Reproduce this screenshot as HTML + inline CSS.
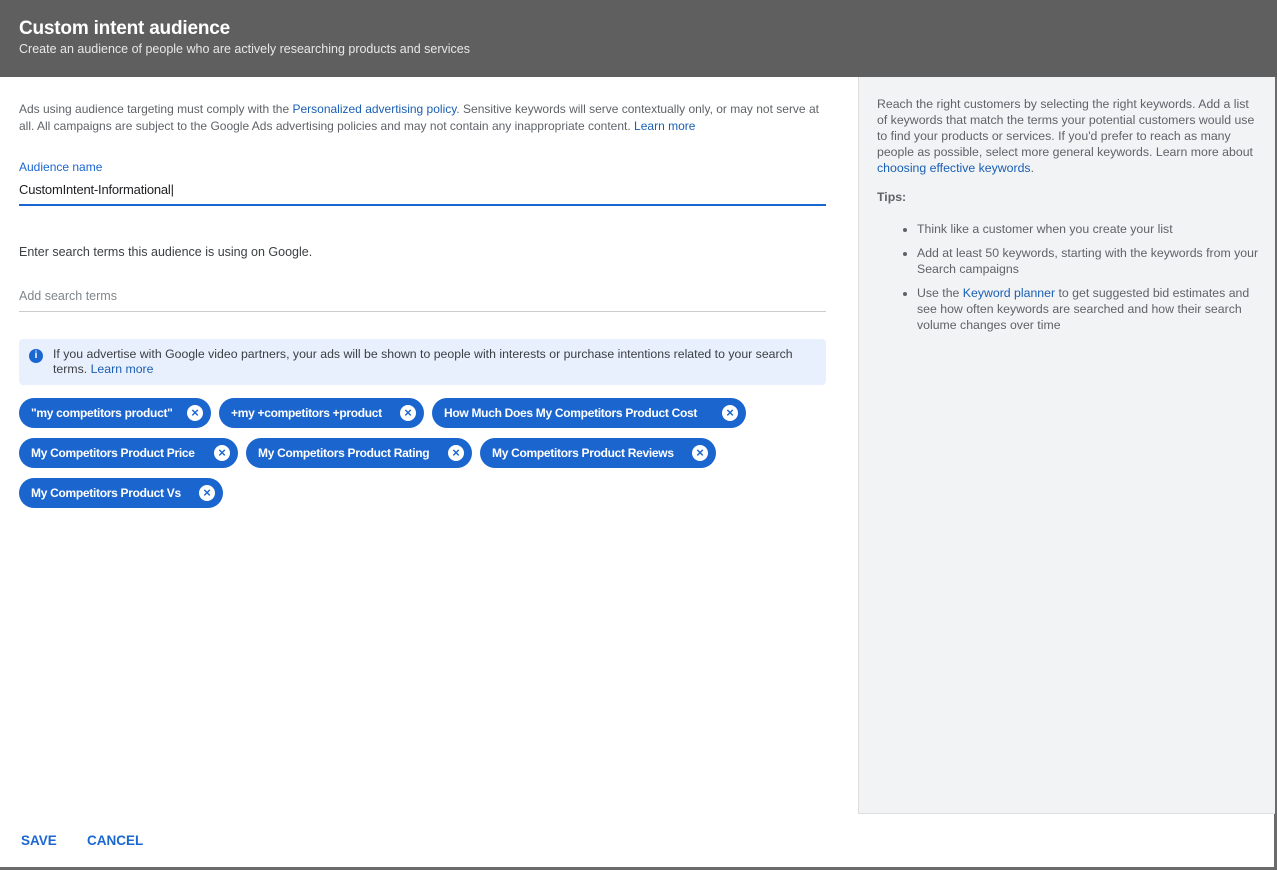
<!DOCTYPE html><html><head><style>
body{margin:0;width:1277px;height:870px;background:#6b6b6b;font-family:"Liberation Sans",Arial,sans-serif;position:relative;overflow:hidden;color:#3c4043}
.hd{position:absolute;left:0;top:0;width:1277px;height:77px;background:#5f5f5f;color:#fff}
.hd h1{position:absolute;left:19px;top:18px;margin:0;font-size:19px;font-weight:bold;letter-spacing:-0.2px}
.hd p{position:absolute;left:19px;top:42px;margin:0;font-size:12.5px;color:#e8e8e8}
.main{position:absolute;left:0;top:77px;width:858px;height:737px;background:#fff}
.side{position:absolute;left:858px;top:77px;width:416px;height:736px;background:#f1f3f4;border-left:1px solid #ddd;border-bottom:1px solid #ddd;font-size:12.3px;line-height:16px;color:#5f6368}
.foot{position:absolute;left:0;top:814px;width:1274px;height:53px;background:#fff}
a{color:#1a5fb4;text-decoration:none}
.chip{position:absolute;height:30px;border-radius:15px;background:#1b65cf;color:#fff;font-size:12px;font-weight:bold;line-height:30px;padding-left:12px;box-sizing:border-box;white-space:nowrap;letter-spacing:-0.3px}
.x{position:absolute;right:8px;top:7px;width:16px;height:16px;border-radius:50%;background:#fff;color:#1b65cf;font-size:13px;line-height:16px;text-align:center;font-weight:bold;letter-spacing:0}
li{margin-bottom:8px}
</style></head><body>
<div class="hd"><h1>Custom intent audience</h1><p>Create an audience of people who are actively researching products and services</p></div>
<div class="main">
<div style="position:absolute;left:19px;top:24px;width:810px;font-size:12px;line-height:17px;color:#5f6368">Ads using audience targeting must comply with the <a>Personalized advertising policy</a>. Sensitive keywords will serve contextually only, or may not serve at all. All campaigns are subject to the Google Ads advertising policies and may not contain any inappropriate content. <a>Learn more</a></div>
<div style="position:absolute;left:19px;top:83px;font-size:12px;color:#1a67d2">Audience name</div>
<div style="position:absolute;left:19px;top:105px;font-size:13px;color:#202124;letter-spacing:-0.2px">CustomIntent-Informational|</div>
<div style="position:absolute;left:19px;top:127px;width:807px;height:2px;background:#1a67d2"></div>
<div style="position:absolute;left:19px;top:168px;font-size:12.5px">Enter search terms this audience is using on Google.</div>
<div style="position:absolute;left:19px;top:212px;font-size:12.5px;color:#80868b">Add search terms</div>
<div style="position:absolute;left:19px;top:234px;width:807px;height:1px;background:#ccc"></div>
<div style="position:absolute;left:19px;top:262px;width:807px;height:46px;background:#e8f0fe;border-radius:4px;font-size:12.3px;line-height:15px;color:#3c4043"><div style="position:absolute;left:10px;top:10px;width:14px;height:14px;border-radius:50%;background:#1a67d2;color:#fff;font-size:10px;line-height:14px;text-align:center;font-weight:bold">i</div><div style="position:absolute;left:34px;top:8px;width:745px">If you advertise with Google video partners, your ads will be shown to people with interests or purchase intentions related to your search terms. <a>Learn more</a></div></div>
<div class="chip" style="left:19px;top:321px;width:192px">"my competitors product"<span class="x">×</span></div>
<div class="chip" style="left:219px;top:321px;width:205px">+my +competitors +product<span class="x">×</span></div>
<div class="chip" style="left:432px;top:321px;width:314px">How Much Does My Competitors Product Cost<span class="x">×</span></div>
<div class="chip" style="left:19px;top:361px;width:219px">My Competitors Product Price<span class="x">×</span></div>
<div class="chip" style="left:246px;top:361px;width:226px">My Competitors Product Rating<span class="x">×</span></div>
<div class="chip" style="left:480px;top:361px;width:236px">My Competitors Product Reviews<span class="x">×</span></div>
<div class="chip" style="left:19px;top:401px;width:204px">My Competitors Product Vs<span class="x">×</span></div>
</div>
<div class="side">
<div style="position:absolute;left:18px;top:19px;width:378px">Reach the right customers by selecting the right keywords. Add a list of keywords that match the terms your potential customers would use to find your products or services. If you'd prefer to reach as many people as possible, select more general keywords. Learn more about <a>choosing effective keywords</a>.</div>
<div style="position:absolute;left:18px;top:112px;font-weight:bold">Tips:</div>
<ul style="position:absolute;left:18px;top:144px;width:355px;margin:0;padding-left:40px">
<li>Think like a customer when you create your list</li>
<li>Add at least 50 keywords, starting with the keywords from your Search campaigns</li>
<li>Use the <a>Keyword planner</a> to get suggested bid estimates and see how often keywords are searched and how their search volume changes over time</li></ul>
</div>
<div class="foot"><span style="position:absolute;left:21px;top:19px;font-size:13.5px;font-weight:bold;color:#1a67d2">SAVE</span><span style="position:absolute;left:87px;top:19px;font-size:13.5px;font-weight:bold;color:#1a67d2">CANCEL</span></div>
</body></html>
